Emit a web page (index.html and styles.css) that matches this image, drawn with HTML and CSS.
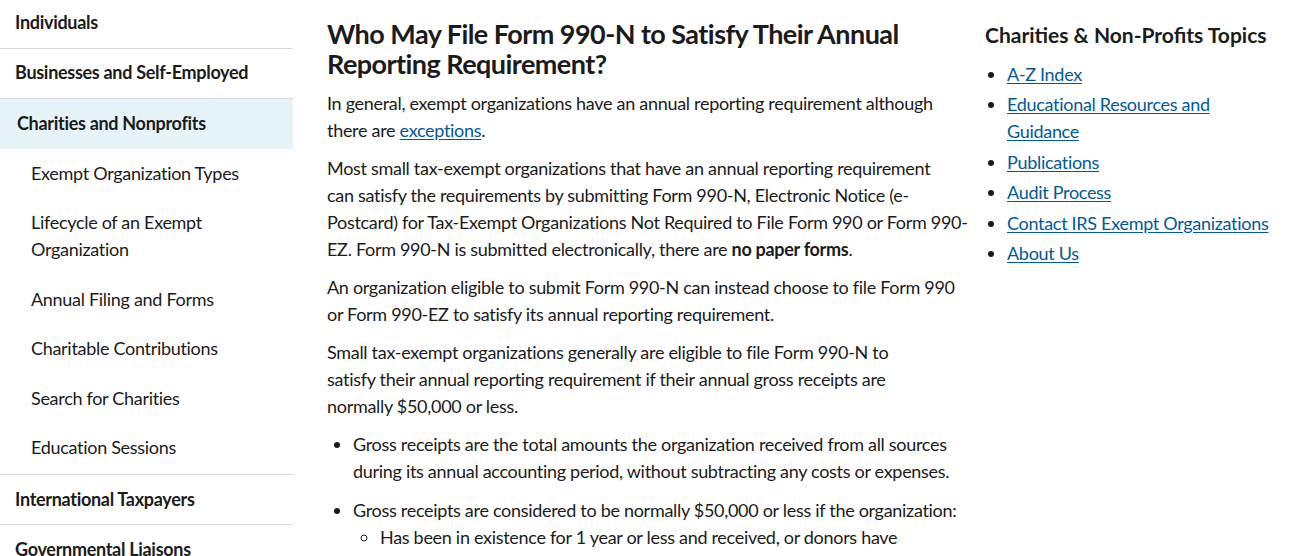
FILE: index.html
```html
<!DOCTYPE html>
<html lang="en">
<head>
<meta charset="utf-8">
<title>Who May File Form 990-N</title>
<link rel="stylesheet" href="styles.css">
</head>
<body>
<div class="page">
  <nav class="sidenav">
    <a class="nav-top" href="#">Individuals</a>
    <a class="nav-top" href="#">Businesses and Self-Employed</a>
    <a class="nav-top active" href="#">Charities and Nonprofits</a>
    <ul class="nav-sub">
      <li><a href="#">Exempt Organization Types</a></li>
      <li><a href="#">Lifecycle of an Exempt<br>Organization</a></li>
      <li><a href="#">Annual Filing and Forms</a></li>
      <li><a href="#">Charitable Contributions</a></li>
      <li><a href="#">Search for Charities</a></li>
      <li><a href="#">Education Sessions</a></li>
    </ul>
    <a class="nav-top after-sub" href="#">International Taxpayers</a>
    <a class="nav-top after-sub" href="#">Governmental Liaisons</a>
  </nav>

  <main class="content">
    <h1 class="title">Who May File Form 990-N to Satisfy Their Annual<br>Reporting Requirement?</h1>
    <p>In general, exempt organizations have an annual reporting requirement although<br>there are <a href="#">exceptions</a>.</p>
    <p>Most small tax-exempt organizations that have an annual reporting requirement<br>can satisfy the requirements by submitting Form 990-N, Electronic Notice (e-<br>Postcard) for Tax-Exempt Organizations Not Required to File Form 990 or Form 990-<br>EZ. Form 990-N is submitted electronically, there are <strong>no paper forms</strong>.</p>
    <p>An organization eligible to submit Form 990-N can instead choose to file Form 990<br>or Form 990-EZ to satisfy its annual reporting requirement.</p>
    <p>Small tax-exempt organizations generally are eligible to file Form 990-N to<br>satisfy their annual reporting requirement if their annual gross receipts are<br>normally $50,000 or less.</p>
    <ul class="bullets">
      <li>Gross receipts are the total amounts the organization received from all sources<br>during its annual accounting period, without subtracting any costs or expenses.</li>
      <li>Gross receipts are considered to be normally $50,000 or less if the organization:
        <ul class="sub-bullets">
          <li>Has been in existence for 1 year or less and received, or donors have</li>
        </ul>
      </li>
    </ul>
  </main>

  <aside class="topics">
    <h2 class="topics-title">Charities &amp; Non-Profits Topics</h2>
    <ul class="topics-list">
      <li><a href="#">A-Z Index</a></li>
      <li><a href="#">Educational Resources and<br>Guidance</a></li>
      <li><a href="#">Publications</a></li>
      <li><a href="#">Audit Process</a></li>
      <li><a href="#">Contact IRS Exempt Organizations</a></li>
      <li><a href="#">About Us</a></li>
    </ul>
  </aside>
</div>
</body>
</html>
```

FILE: styles.css
```css
html, body {
  margin: 0;
  padding: 0;
  background: #ffffff;
}

body {
  font-family: Lato, "Noto Sans", sans-serif;
  font-size: 18px;
  line-height: 27px;
  color: #1b1b1b;
  letter-spacing: -0.3px;
}

.page {
  display: flex;
  align-items: flex-start;
  width: 1299px;
  height: 556px;
  overflow: hidden;
}

/* Sidebar */
.sidenav {
  flex: 0 0 293px;
  display: flex;
  flex-direction: column;
  margin-top: -1px;
}

.nav-top {
  display: block;
  padding: 10px 15px 12px;
  font-weight: 700;
  color: #1b1b1b;
  text-decoration: none;
  border-bottom: 1px solid #d9d9d9;
}

.nav-top.after-sub {
  padding: 11px 15px 11px;
}

.nav-top.active {
  padding: 11px 17px 12px;
  background: #e6f4f9;
  border-bottom: 0;
}

.nav-sub {
  list-style: none;
  margin: 0;
  padding: 0;
  border-bottom: 1px solid #d9d9d9;
}

.nav-sub li {
  padding: 10.5px 15px 12.1px 31px;
}

.nav-sub a {
  color: #1b1b1b;
  text-decoration: none;
}

/* Main content */
.content {
  flex: 0 0 656px;
  margin-left: 34px;
  padding-top: 19px;
  white-space: nowrap;
}

.title {
  margin: 0 0 10.5px;
  font-size: 27px;
  line-height: 30px;
  font-weight: 700;
  letter-spacing: -0.55px;
}

.content p {
  margin: 0 0 11px;
}

.content a,
.topics a {
  color: #00599c;
  text-decoration: underline;
  text-underline-offset: 2px;
}

.bullets {
  margin: 0;
  padding-left: 26px;
}

.bullets > li {
  margin-bottom: 12px;
}

.sub-bullets {
  margin: 0;
  padding-left: 27px;
  list-style: circle;
}

/* Right column */
.topics {
  flex: 0 0 300px;
  margin-left: 2px;
  padding-top: 22px;
}

.topics-title {
  margin: 0 0 12.5px;
  font-size: 21px;
  line-height: 26px;
  font-weight: 700;
  letter-spacing: 0;
}

.topics-list {
  margin: 0;
  padding-left: 22px;
}

.topics-list li {
  margin-bottom: 3.6px;
}
```
